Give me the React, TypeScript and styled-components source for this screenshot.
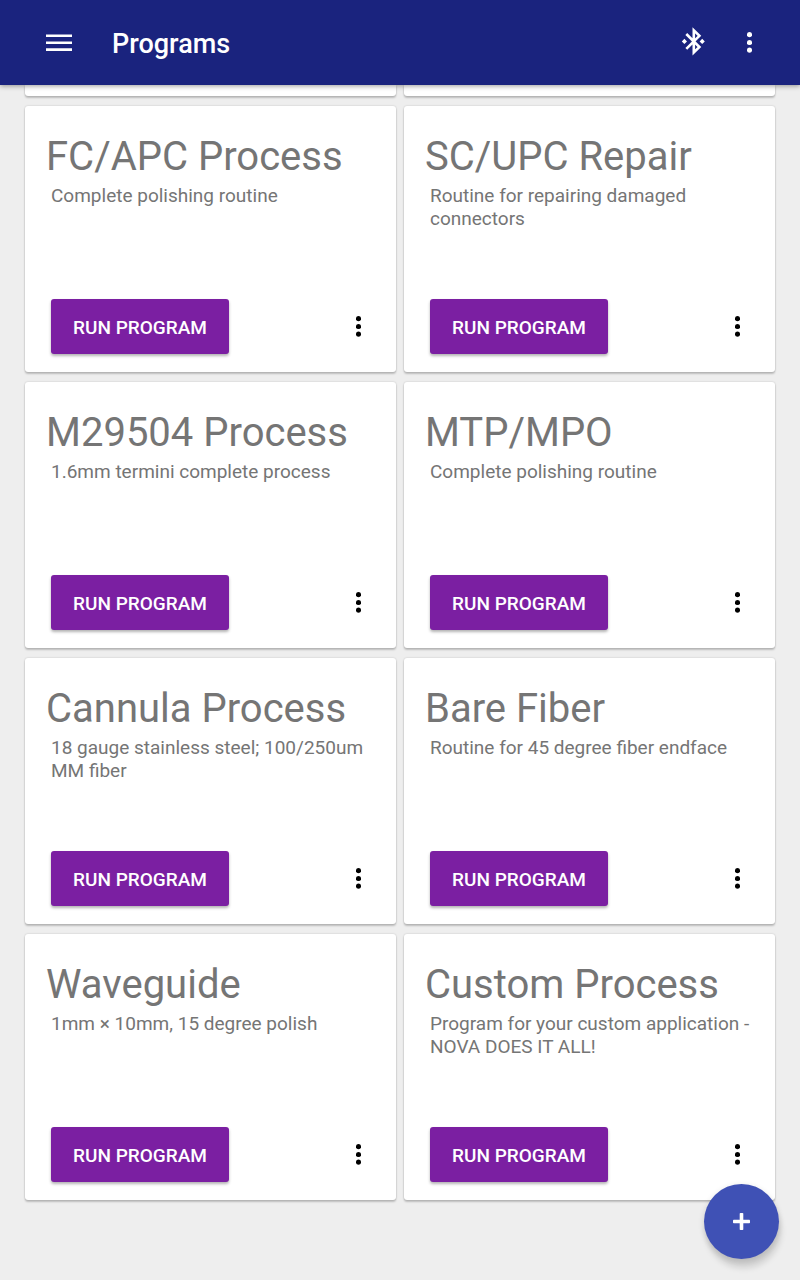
import React from 'react';
import styled, { createGlobalStyle } from 'styled-components';

const GlobalStyle = createGlobalStyle`
  *, *::before, *::after { box-sizing: border-box; }
  body { margin: 0; background: #eeeeee; font-family: Roboto, "Liberation Sans", sans-serif; }
  button { font-family: inherit; margin: 0; padding: 0; border: 0; cursor: pointer; }
`;

const Page = styled.div`
  min-height: 100vh;
`;

const AppBar = styled.header`
  position: sticky;
  top: 0;
  z-index: 2;
  display: flex;
  align-items: center;
  height: 85px;
  padding: 0 23px 0 32px;
  background: #1a237e;
  color: #ffffff;
  box-shadow: 0 1px 5px rgba(0, 0, 0, 0.4);
`;

const AppTitle = styled.h1`
  flex: 1;
  margin: 0 0 0 26px;
  font-size: 27px;
  line-height: 32px;
  font-weight: 500;
  padding-top: 2px;
`;

const IconButton = styled.button<{ $width: number }>`
  display: flex;
  align-items: center;
  justify-content: center;
  width: ${(p) => p.$width}px;
  height: 55px;
  background: transparent;
  color: inherit;
`;

const Grid = styled.main`
  display: grid;
  grid-template-columns: 1fr 1fr;
  gap: 10px 8px;
  padding: 0 25px 80px;
`;

const cardShadow = '0 2px 2px rgba(0, 0, 0, 0.2), 0 0 2px rgba(0, 0, 0, 0.2)';

const CardEnd = styled.div`
  height: 11px;
  background: #ffffff;
  border-radius: 0 0 3px 3px;
  box-shadow: ${cardShadow};
`;

const Card = styled.article`
  display: flex;
  flex-direction: column;
  min-height: 266px;
  padding: 27px 16px 18px 26px;
  background: #ffffff;
  border-radius: 3px;
  box-shadow: ${cardShadow};
  color: #757575;
`;

const CardTitle = styled.h2`
  margin: 0 0 0 -5px;
  font-size: 40px;
  line-height: 48px;
  font-weight: 400;
  white-space: nowrap;
`;

const Description = styled.p`
  margin: 3px 0 0;
  font-size: 19px;
  line-height: 23px;
`;

const Actions = styled.div`
  display: flex;
  align-items: center;
  justify-content: space-between;
  height: 55px;
  margin-top: auto;
  color: #000000;
`;

const RunButton = styled.button`
  width: 178px;
  height: 55px;
  padding-top: 2px;
  background: #7b1fa2;
  color: #ffffff;
  border-radius: 3px;
  font-size: 19px;
  font-weight: 500;
  box-shadow: 0 2px 3px rgba(0, 0, 0, 0.3);
`;

const AddButton = styled.button`
  position: fixed;
  right: 21px;
  bottom: 21px;
  z-index: 3;
  display: flex;
  align-items: center;
  justify-content: center;
  width: 75px;
  height: 75px;
  border-radius: 50%;
  background: #3f51b5;
  color: #ffffff;
  box-shadow: 2px 9px 6px rgba(0, 0, 0, 0.13), 0 2px 6px rgba(0, 0, 0, 0.14);
`;

const MoreIcon = () => (
  <svg width="5" height="21" viewBox="0 0 5 21" fill="currentColor" aria-hidden="true">
    <circle cx="2.5" cy="2.7" r="2.6" />
    <circle cx="2.5" cy="10.5" r="2.6" />
    <circle cx="2.5" cy="18.2" r="2.6" />
  </svg>
);

const MenuIcon = () => (
  <svg width="26" height="17" viewBox="0 0 26 17" fill="currentColor" aria-hidden="true">
    <path d="M0 .5h26v2.6H0zM0 7.4h26V10H0zM0 14.3h26v2.6H0z" />
  </svg>
);

const BluetoothIcon = () => (
  <svg width="24" height="31" viewBox="0 0 24 31" fill="currentColor" aria-hidden="true">
    <path
      d="M5.3 7L18.4 20L12.8 25.4V3.4L18.4 8.8L5.3 21.8"
      fill="none"
      stroke="currentColor"
      strokeWidth="2.6"
    />
    <path d="M3.4 11.8l2.6 2.6-2.6 2.6-2.6-2.6zM21.2 11.8l2.6 2.6-2.6 2.6-2.6-2.6z" />
  </svg>
);

const PlusIcon = () => (
  <svg width="17" height="17" viewBox="0 0 17 17" fill="currentColor" aria-hidden="true">
    <rect x="6.7" y="0" width="3.6" height="17" rx="0.8" />
    <rect x="0" y="6.7" width="17" height="3.6" rx="0.8" />
  </svg>
);

const programs = [
  { name: 'FC/APC Process', description: 'Complete polishing routine' },
  { name: 'SC/UPC Repair', description: 'Routine for repairing damaged connectors' },
  { name: 'M29504 Process', description: '1.6mm termini complete process' },
  { name: 'MTP/MPO', description: 'Complete polishing routine' },
  { name: 'Cannula Process', description: '18 gauge stainless steel; 100/250um MM fiber' },
  { name: 'Bare Fiber', description: 'Routine for 45 degree fiber endface' },
  { name: 'Waveguide', description: '1mm × 10mm, 15 degree polish' },
  { name: 'Custom Process', description: 'Program for your custom application - NOVA DOES IT ALL!' },
];

export default function App() {
  return (
    <Page>
      <GlobalStyle />
      <AppBar>
        <IconButton $width={54} aria-label="Open menu"><MenuIcon /></IconButton>
        <AppTitle>Programs</AppTitle>
        <IconButton $width={58} aria-label="Bluetooth"><BluetoothIcon /></IconButton>
        <IconButton $width={55} aria-label="More options"><MoreIcon /></IconButton>
      </AppBar>
      <Grid>
        <CardEnd />
        <CardEnd />
        {programs.map((program) => (
          <Card key={program.name}>
            <CardTitle>{program.name}</CardTitle>
            <Description>{program.description}</Description>
            <Actions>
              <RunButton type="button">RUN PROGRAM</RunButton>
              <IconButton $width={43} aria-label={`Options for ${program.name}`}><MoreIcon /></IconButton>
            </Actions>
          </Card>
        ))}
      </Grid>
      <AddButton type="button" aria-label="Add program"><PlusIcon /></AddButton>
    </Page>
  );
}
